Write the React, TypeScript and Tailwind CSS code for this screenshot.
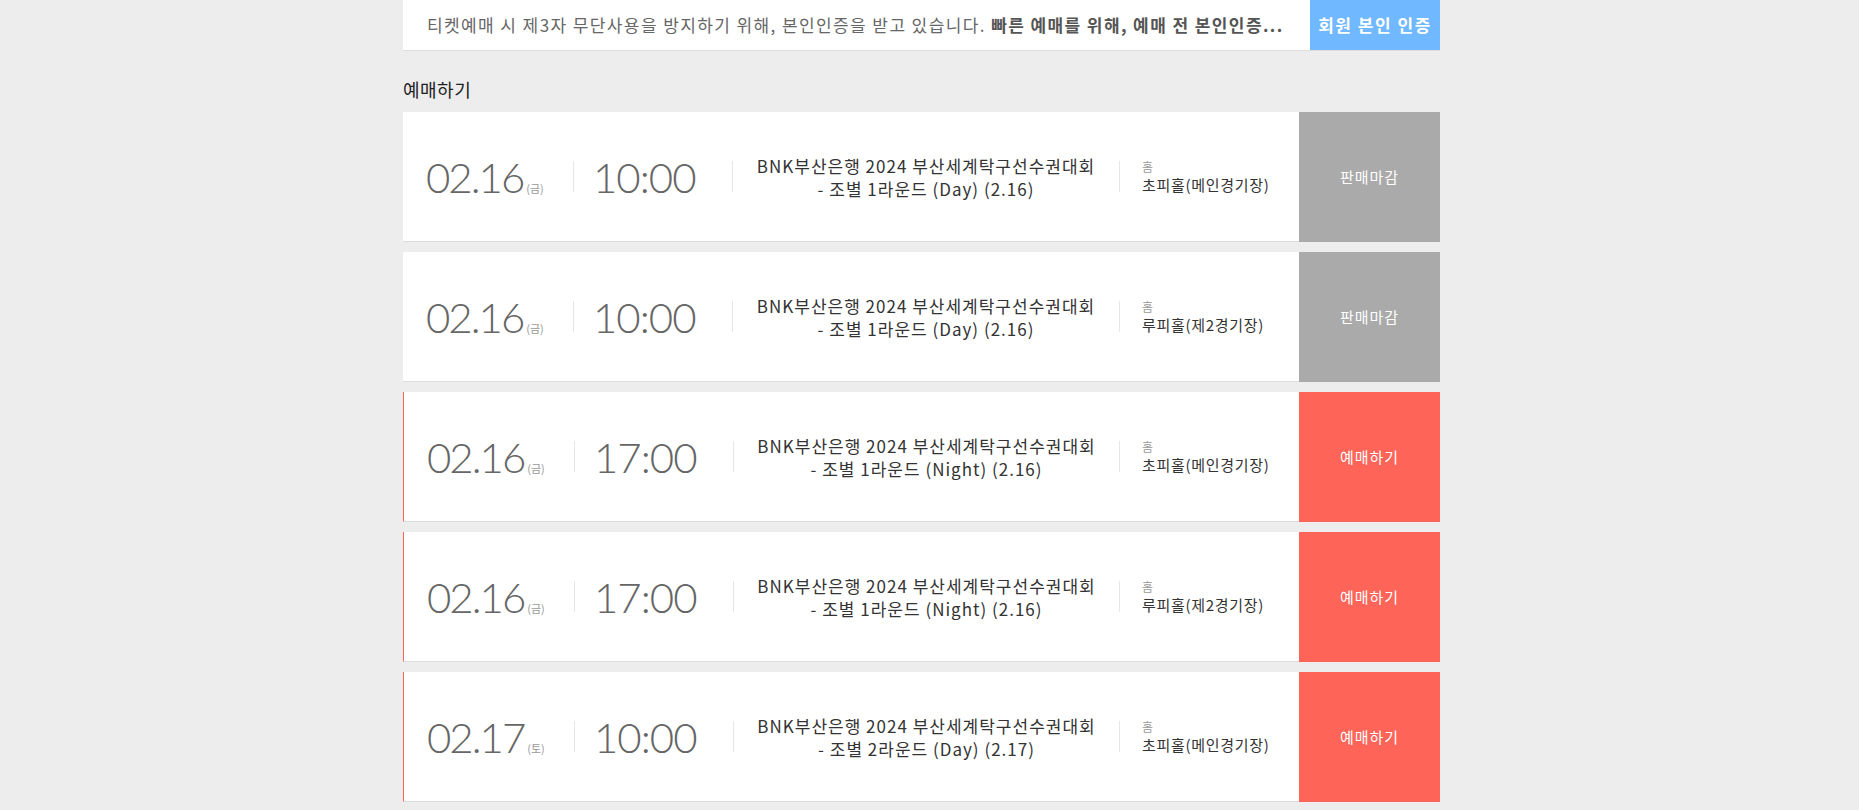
import React from 'react';

type Show = {
  date: string;
  day: string;
  time: string;
  round: string;
  venue: string;
  open: boolean;
};

const shows: Show[] = [
  { date: '02.16', day: '(금)', time: '10:00', round: '- 조별 1라운드 (Day) (2.16)', venue: '초피홀(메인경기장)', open: false },
  { date: '02.16', day: '(금)', time: '10:00', round: '- 조별 1라운드 (Day) (2.16)', venue: '루피홀(제2경기장)', open: false },
  { date: '02.16', day: '(금)', time: '17:00', round: '- 조별 1라운드 (Night) (2.16)', venue: '초피홀(메인경기장)', open: true },
  { date: '02.16', day: '(금)', time: '17:00', round: '- 조별 1라운드 (Night) (2.16)', venue: '루피홀(제2경기장)', open: true },
  { date: '02.17', day: '(토)', time: '10:00', round: '- 조별 2라운드 (Day) (2.17)', venue: '초피홀(메인경기장)', open: true },
];

const kr = "font-['Noto_Sans_CJK_KR',sans-serif]";

function ShowRow({ show }: { show: Show }) {
  return (
    <div className="flex h-[130px]">
      <div
        className={
          'flex flex-1 items-center bg-white border-b border-[#dcdcdc] ' +
          (show.open ? 'border-l border-l-[#ff6459]' : '')
        }
      >
        <div className="flex w-[170px] items-center pl-[23px] h-[31px]">
          <div className="flex items-baseline">
            <span className="font-['Lato',sans-serif] font-light text-[42px] leading-none tracking-[-2px] text-[#666666]">
              {show.date}
            </span>
            <span className={kr + ' ml-[3px] text-[11px] text-[#999999]'}>{show.day}</span>
          </div>
        </div>
        <div className="h-[31px] w-px bg-[#e6e6e6]" />
        <div className="flex w-[158px] items-center pl-[19px]">
          <span className="font-['Lato',sans-serif] font-light text-[42px] leading-none tracking-[-1px] text-[#666666]">
            {show.time}
          </span>
        </div>
        <div className="h-[31px] w-px bg-[#e6e6e6]" />
        <div className={kr + ' flex-1 text-center text-[17px] leading-[23px] tracking-[1px] text-[#333333]'}>
          <p>BNK부산은행 2024 부산세계탁구선수권대회</p>
          <p>{show.round}</p>
        </div>
        <div className="h-[31px] w-px bg-[#e6e6e6]" />
        <div className={kr + ' w-[179px] pl-[22px]'}>
          <p className="text-[12px] leading-[16px] text-[#999999]">홈</p>
          <p className="text-[15px] leading-[19px] tracking-[0.7px] text-[#333333]">{show.venue}</p>
        </div>
      </div>
      <button
        className={
          kr +
          ' w-[141px] h-full text-[15px] tracking-[1px] text-white ' +
          (show.open ? 'bg-[#ff6459]' : 'bg-[#aaaaaa]')
        }
      >
        {show.open ? '예매하기' : '판매마감'}
      </button>
    </div>
  );
}

export default function App() {
  return (
    <div className="min-h-screen bg-[#ededed] pb-10">
      <div className="ml-[403px] w-[1037px]">
        <div className="flex h-[51px] bg-white border-b border-[#dddddd]">
          <p
            className={
              kr +
              ' flex-1 min-w-0 whitespace-nowrap overflow-hidden pl-6 text-[17px] leading-[50px] tracking-[1.4px] text-[#666666]'
            }
          >
            티켓예매 시 제3자 무단사용을 방지하기 위해, 본인인증을 받고 있습니다.{' '}
            <strong className="font-bold text-[#555555]">빠른 예매를 위해, 예매 전 본인인증...</strong>
          </p>
          <button className={kr + ' w-[130px] shrink-0 bg-[#70b8ff] text-[17px] font-bold text-white tracking-[1.5px]'}>
            회원 본인 인증
          </button>
        </div>

        <h2 className={kr + ' mt-[26px] mb-[11px] text-[18px] leading-[24px] tracking-[0.5px] text-[#222222]'}>
          예매하기
        </h2>

        <div className="flex flex-col gap-[10px]">
          {shows.map((s, i) => (
            <ShowRow key={i} show={s} />
          ))}
        </div>
      </div>
    </div>
  );
}
